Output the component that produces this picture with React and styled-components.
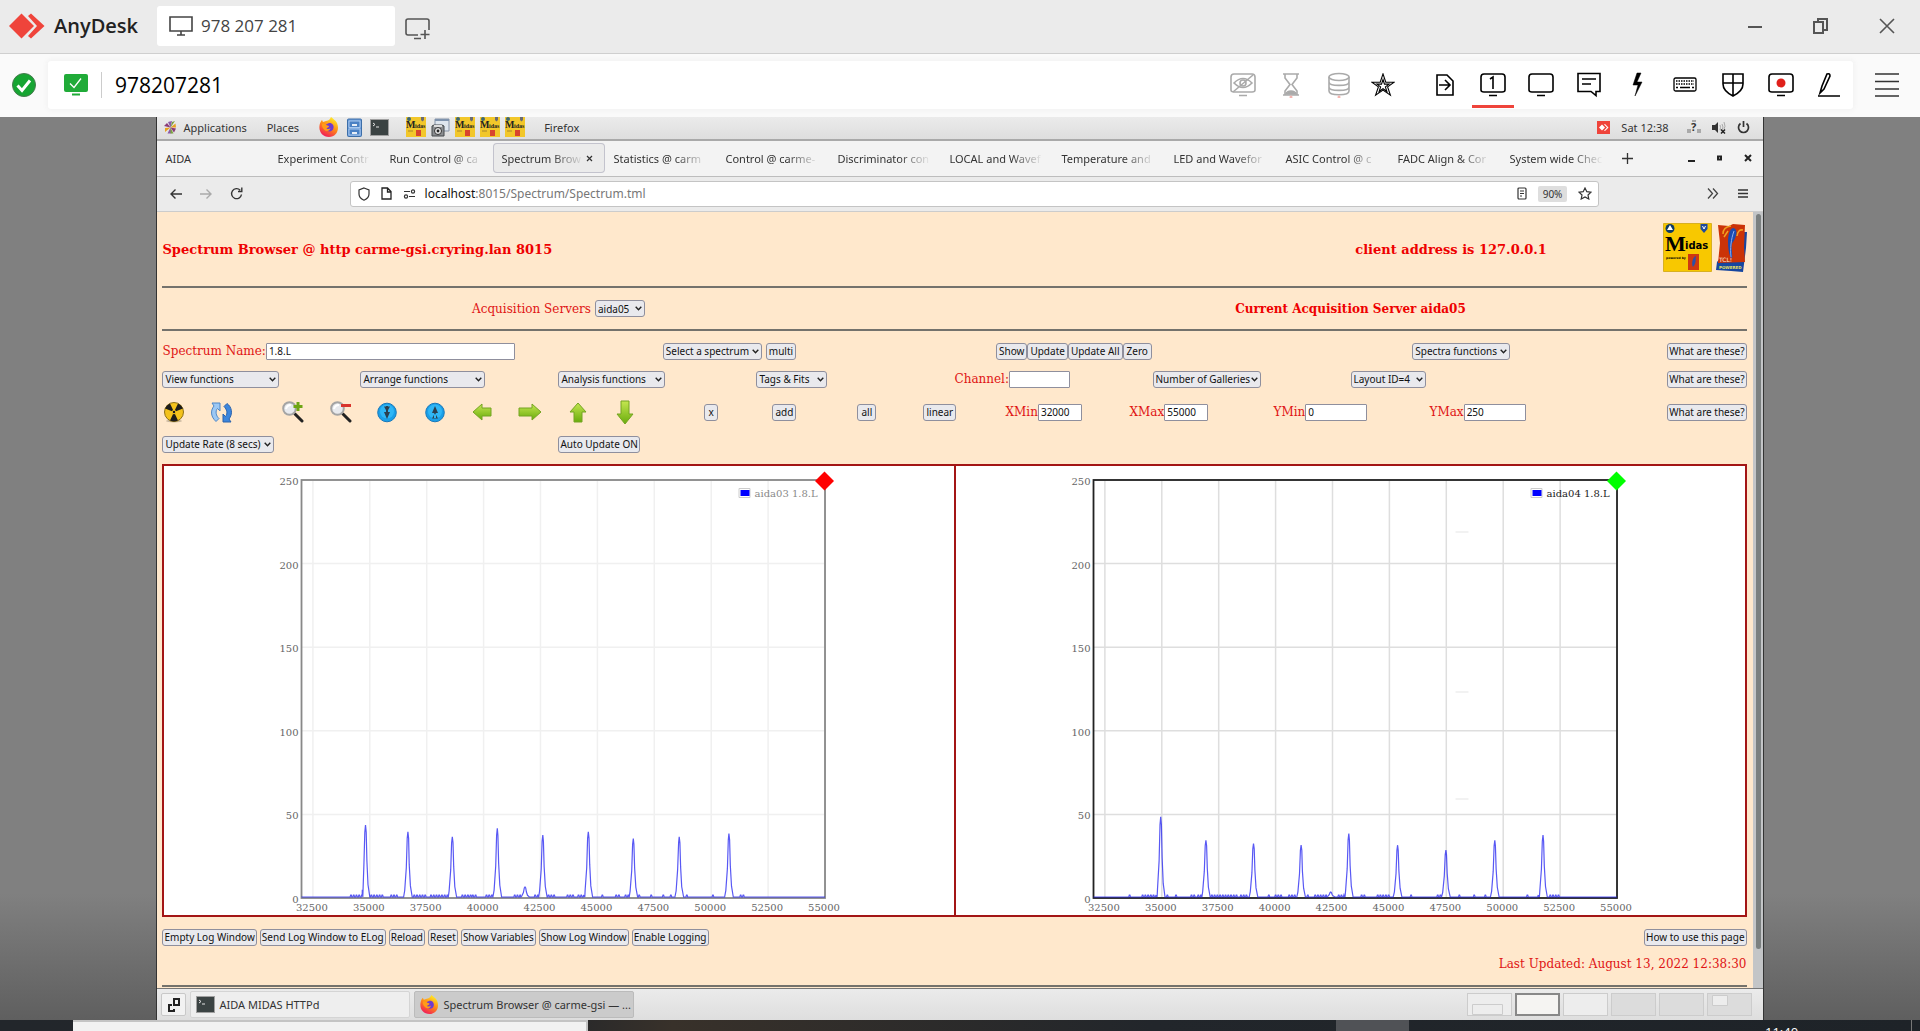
import React from "react"
import styled, { createGlobalStyle, css } from 'styled-components'


const App = () => (
  <Shell>
    <GlobalStyle />
    <TitleBar>
      <Brand>
        <AnyDeskMark />
        AnyDesk
      </Brand>
      <SessionTab type="button">
        <MonitorIcon />
        978 207 281
      </SessionTab>
      <NewSession type="button" aria-label="New session">
        <NewSessionIcon />
      </NewSession>
      <WindowButtons>
        <WindowButton type="button" aria-label="Minimize">
          <svg width="14" height="14" stroke="#555" strokeWidth="2"><path d="M0 8h14" /></svg>
        </WindowButton>
        <WindowButton type="button" aria-label="Restore">
          <svg width="16" height="16" fill="none" stroke="#555" strokeWidth="2"><path d="M1 4h9v11H1zM5 4V1h9v11h-4" /></svg>
        </WindowButton>
        <WindowButton type="button" aria-label="Close">
          <svg width="16" height="16" stroke="#555" strokeWidth="1.6"><path d="M1 1l14 14M15 1L1 15" /></svg>
        </WindowButton>
      </WindowButtons>
    </TitleBar>

    <AddressBar>
      <StatusIcon />
      <AddressBox>
        <ScreenCheckIcon />
        <AddressInput aria-label="Remote address" defaultValue="978207281" />
        <ToolGroup>
          {faded.map(([name, icon]) => <ToolButton key={name} type="button" aria-label={name} $faded>{icon}</ToolButton>)}
          <ToolButton type="button" aria-label="Favorite" $narrow>
            <svg {...line} width="24" height="24" strokeWidth="1.200"><path d="M13 1l3 9h9l-7 5 3 9-8-5.500-8 5.500 3-9-7-5h9z" /><path d="M13 7l1.600 5h5l-4 3 1.600 5-4.200-3-4.200 3 1.600-5-4-3h5z" /></svg>
          </ToolButton>
        </ToolGroup>
        <ToolGroup>
          {tools.map(([name, icon]) => <ToolButton key={name} type="button" aria-label={name} $active={name === 'Screen 1'}>{icon}</ToolButton>)}
        </ToolGroup>
      </AddressBox>
      <PlainButton type="button" aria-label="Menu">
        <svg width="24" height="24" stroke="#333" strokeWidth="1.600"><path d="M0 1h24M0 8.500h24M0 16h24M0 23h24" /></svg>
      </PlainButton>
    </AddressBar>

    <Viewer>
      <Desktop>
        <TopPanel>
          <PanelMenu type="button"><FootIcon />Applications</PanelMenu>
          <PanelMenu type="button">Places</PanelMenu>
          <Launchers>
            <FirefoxIcon size={20} />
            <CabinetIcon />
            <TerminalIcon />
          </Launchers>
          <Trays>
            <MidasSmall />
            <CameraIcon />
            <MidasSmall />
            <MidasSmall />
            <MidasSmall />
          </Trays>
          <PanelMenu type="button">Firefox</PanelMenu>
          <PanelRight>
            <svg width="13" height="13"><path fill="#ef443b" d="M0 0h13v13H0z" /><path fill="#fff" d="M2 6.500L5 3.500l3 3-3 3zM7 3.500l1-.5 3.500 3.500L8 10l-1-.5 3-3z" /></svg>
            <span>Sat 12:38</span>
            <NetworkIcon />
            <VolumeIcon />
            <PowerIcon />
          </PanelRight>
        </TopPanel>

        <TabStrip>
          {tabs.map((title, i) => (
            <Tab key={title} type="button" $selected={i === 3}>
              <TabText $whole={i === 0}>{title}</TabText>
              {i === 3 && <svg width="7" height="7" stroke="#333" strokeWidth="1.200"><path d="M1 1l5 5M6 1L1 6" /></svg>}
            </Tab>
          ))}
          <NewTab type="button" aria-label="New tab">
            <svg width="11" height="11" stroke="#333" strokeWidth="1.300"><path d="M5.500 0v11M0 5.500h11" /></svg>
          </NewTab>
          <TabWindowButtons>
            <PlainButton type="button" aria-label="Minimize browser"><svg width="7" height="8" stroke="#222" strokeWidth="2"><path d="M0 7h7" /></svg></PlainButton>
            <PlainButton type="button" aria-label="Restore browser"><svg width="7" height="8" fill="none" stroke="#222" strokeWidth="2"><path d="M2 2.500h3v3H2z" /></svg></PlainButton>
            <PlainButton type="button" aria-label="Close browser"><svg width="8" height="8" stroke="#222" strokeWidth="2"><path d="M1 1l6 6M7 1L1 7" /></svg></PlainButton>
          </TabWindowButtons>
        </TabStrip>

        <NavBar>
          <NavButtons>
            <PlainButton type="button" aria-label="Back"><svg width="12" height="12" fill="none" stroke="#333" strokeWidth="1.400"><path d="M12 6H1M5.500 1.500L1 6l4.500 4.500" /></svg></PlainButton>
            <PlainButton type="button" aria-label="Forward"><svg width="12" height="12" fill="none" stroke="#aaa" strokeWidth="1.400"><path d="M0 6h11M6.500 1.500L11 6l-4.500 4.500" /></svg></PlainButton>
            <PlainButton type="button" aria-label="Reload"><svg width="13" height="13" fill="none" stroke="#333" strokeWidth="1.400"><path d="M11.500 7.500a5 5 0 1 1-1.300-4.300M11.800.5v4H8" /></svg></PlainButton>
          </NavButtons>
          <UrlField>
            <svg width="12" height="14" fill="none" stroke="#333" strokeWidth="1.200"><path d="M6 1l5 2v4c0 3-2 5-5 6.200C3 12 1 10 1 7V3z" /></svg>
            <svg width="11" height="13" fill="none" stroke="#222" strokeWidth="1.300"><path d="M1 1h5.500L10 4.500V12H1zM6.500 1v4H10" /></svg>
            <svg width="13" height="10" fill="none" stroke="#333" strokeWidth="1.200"><path d="M1 2.500h6M6 7.500h6" /><circle cx="10" cy="2.500" r="1.600" /><circle cx="3" cy="7.500" r="1.600" /></svg>
            <Url><b>localhost</b>:8015/Spectrum/Spectrum.tml</Url>
            <svg width="10" height="13" fill="none" stroke="#333" strokeWidth="1.200"><rect x="1" y="1" width="8" height="11" rx="1" /><path d="M3 4h4M3 6.500h4M3 9h2" /></svg>
            <Zoom>90%</Zoom>
            <svg width="14" height="13" fill="none" stroke="#333" strokeWidth="1.200"><path d="M7 1l1.800 3.700 4.200.5-3 2.800.8 4L7 10l-3.800 2 .8-4-3-2.800 4.200-.5z" /></svg>
          </UrlField>
          <NavRight>
            <PlainButton type="button" aria-label="More tools"><svg width="12" height="11" fill="none" stroke="#444" strokeWidth="1.300"><path d="M1 .5l4.500 5L1 10.500M6 .5l4.500 5-4.500 5" /></svg></PlainButton>
            <PlainButton type="button" aria-label="Browser menu"><svg width="10" height="9" stroke="#333" strokeWidth="1.400"><path d="M0 1h10M0 4.500h10M0 8h10" /></svg></PlainButton>
          </NavRight>
        </NavBar>

        <BrowserBody>
          <Page>
            <PageHeader>
              <Heading>Spectrum Browser @ http carme-gsi.cryring.lan 8015</Heading>
              <HeaderSide>
                <Heading as="h3">client address is 127.0.0.1</Heading>
                <Logos><MidasLogo /><TclLogo /></Logos>
              </HeaderSide>
            </PageHeader>
            <Rule />
            <Servers>
              <Field>
                <label htmlFor="servers">Acquisition Servers</label>
                <Picker id="servers" $w={50} $gap={4}><option>aida05</option></Picker>
              </Field>
              <ServerName>Current Acquisition Server aida05</ServerName>
            </Servers>
            <Rule />
            <Controls>
              <Row $cols="500fr 333fr 416fr 334fr" $h={28}>
                <Field>
                  <label htmlFor="name">Spectrum Name:</label>
                  <TextBox id="name" $w={249} defaultValue="1.8.L" />
                </Field>
                <Buttons $gap={4}>
                  <Picker aria-label="Spectrum" $w={99}><option>Select a spectrum</option></Picker>
                  <Push type="button" $pad={2}>multi</Push>
                </Buttons>
                <Buttons>
                  <Push type="button" $pad={2}>Show</Push>
                  <Push type="button" $pad={2}>Update</Push>
                  <Push type="button" $pad={2}>Update All</Push>
                  <Push type="button" $pad={3}>Zero</Push>
                </Buttons>
                <Spread>
                  <Picker aria-label="Spectra functions" $w={98}><option>Spectra functions</option></Picker>
                  <Push type="button">What are these?</Push>
                </Spread>
              </Row>
              <Row $cols="repeat(6, 1fr) 2fr" $h={28}>
                <Picker aria-label="View functions" $w={117}><option>View functions</option></Picker>
                <Picker aria-label="Arrange functions" $w={125}><option>Arrange functions</option></Picker>
                <Picker aria-label="Analysis functions" $w={107}><option>Analysis functions</option></Picker>
                <Picker aria-label="Tags and fits" $w={71}><option>Tags &amp; Fits</option></Picker>
                <Field>
                  <label htmlFor="channel">Channel:</label>
                  <TextBox id="channel" $w={61} />
                </Field>
                <Picker aria-label="Number of galleries" $w={108}><option>Number of Galleries</option></Picker>
                <Spread>
                  <Picker aria-label="Layout" $w={75}><option>Layout ID=4</option></Picker>
                  <Push type="button">What are these?</Push>
                </Spread>
              </Row>
              <Row $cols="49fr 71fr 48fr 47fr 48fr 47fr 46fr 51fr 47fr 88fr 68fr 85fr 66fr 82fr 124fr 144fr 156fr 317fr" $h={38}>
                {actions.map(([name, icon]) => <PlainButton key={name} type="button" aria-label={name}>{icon}</PlainButton>)}
                <Push type="button" $pad={3}>x</Push>
                <Push type="button" $pad={2}>add</Push>
                <Push type="button" $pad={3}>all</Push>
                <Push type="button" $pad={2}>linear</Push>
                {limits.map(([name, value, width]) => (
                  <Field key={name}>
                    <label htmlFor={name}>{name}</label>
                    <TextBox id={name} $w={width} defaultValue={value} />
                  </Field>
                ))}
                <Spread>
                  <Field>
                    <label htmlFor="YMax">YMax</label>
                    <TextBox id="YMax" $w={62} defaultValue="250" />
                  </Field>
                  <Push type="button">What are these?</Push>
                </Spread>
              </Row>
              <Row $cols="1fr 3fr" $h={26}>
                <Picker aria-label="Update rate" $w={112}><option>Update Rate (8 secs)</option></Picker>
                <Push type="button">Auto Update ON</Push>
              </Row>
            </Controls>

            <Gallery>
              <Plot {...left} />
              <Plot {...right} />
            </Gallery>

            <Footer>
              <Buttons $gap={3}>
                {logButtons.map(text => <Push key={text} type="button">{text}</Push>)}
              </Buttons>
              <Push type="button">How to use this page</Push>
            </Footer>
            <Updated>Last Updated: August 13, 2022 12:38:30</Updated>
            <Rule />
          </Page>
          <Scrollbar><Thumb /></Scrollbar>
        </BrowserBody>

        <BottomPanel>
          <ShowDesktop type="button" aria-label="Show desktop">
            <svg width="12" height="14" fill="none" stroke="#222" strokeWidth="2"><path d="M6 1h5v6H6zM4 7H1v6h5v-2" /></svg>
          </ShowDesktop>
          <Task type="button"><TerminalIcon />AIDA MIDAS HTTPd</Task>
          <Task type="button" $selected><FirefoxIcon size={19} />Spectrum Browser @ carme-gsi — ...</Task>
          <Workspaces>
            <Workspace $lit><svg width="36" height="20" fill="#ededed" stroke="#ccc"><path d="M.5 9.500h30v10H.5z" /></svg></Workspace>
            <Workspace $current />
            <Workspace $lit />
            <Workspace />
            <Workspace />
            <Workspace><svg width="36" height="20" fill="#ededed" stroke="#ccc"><path d="M.5 .5h15v10H.5z" /></svg></Workspace>
          </Workspaces>
        </BottomPanel>
      </Desktop>
    </Viewer>

    <HostTaskbar>
      <SearchBox />
      <HostTask />
      <Clock>11:40</Clock>
    </HostTaskbar>
  </Shell>
)

export default App


// ---- data

// titles end where the tab cuts them
const tabs = [
  'AIDA', 'Experiment Contr', 'Run Control @ ca', 'Spectrum Brow',
  'Statistics @ carm', 'Control @ carme-', 'Discriminator con', 'LOCAL and Wavef',
  'Temperature and', 'LED and Wavefor', 'ASIC Control @ c', 'FADC Align & Cor',
  'System wide Chec',
]

const limits = [['XMin', '32000', 44], ['XMax', '55000', 44], ['YMin', '0', 62]]

const logButtons = [
  'Empty Log Window', 'Send Log Window to ELog', 'Reload', 'Reset',
  'Show Variables', 'Show Log Window', 'Enable Logging',
]

const left = {
  label: 'aida03 1.8.L',
  marker: '#ff0000',
  frame: '#888',
  grid: '#f0f0f0',
  legend: '#888',
  peaks: [[34812, 43], [36674, 39], [38625, 36], [40601, 41], [41820, 6], [42600, 37], [44600, 39], [46576, 35], [48596, 36], [50780, 38]],
  noise: [[34137, 34643], [35033, 35516], [35907, 36183], [36918, 37400], [37653, 38388], [39032, 39400], [39491, 39721], [40089, 40388], [41330, 41600], [42226, 42380], [42820, 43123], [43651, 43904], [44133, 44380], [45180, 45250], [45788, 45949], [46201, 46370], [46800, 46900], [47328, 47400], [47857, 47930], [48190, 48260], [48891, 49000], [50040, 50110], [51257, 51487]],
}

const right = {
  label: 'aida04 1.8.L',
  marker: '#00ff00',
  frame: '#222',
  grid: '#dedede',
  legend: '#222',
  ghosts: [66, 226, 333],
  peaks: [[34952, 48], [36938, 34], [39029, 32], [41120, 31], [42424, 3], [43215, 38], [45359, 31], [47481, 28], [49629, 34], [51747, 37]],
  noise: [[33549, 33620], [34120, 34740], [35207, 35300], [35588, 35660], [36267, 36400], [36566, 36700], [37164, 38251], [38441, 38800], [39665, 39740], [39963, 40290], [40562, 40861], [41377, 41450], [41703, 42192], [42736, 43008], [43742, 43932], [44448, 44992], [45916, 45990], [47084, 47280], [48036, 48100], [48689, 48760], [49178, 49250], [51026, 51100], [51515, 51560], [52031, 52466]],
}

const shape = [[-190, 0], [-140, 0.1], [-70, 0.45], [-30, 0.9], [0, 1], [30, 0.9], [60, 0.5], [110, 0.17], [190, 0]]

const toX = ch => 137 + (ch - 32000) * 523.5 / 23000
const toY = n => 432 - n * 418 / 250

const trace = (peaks, noise) => {
  const points = [[32000, 0], [55000, 0]]
  peaks.forEach(([ch, n]) => shape.forEach(([dx, k]) => points.push([ch + dx, n * k])))
  noise.forEach(([from, to]) => {
    for (let ch = from; ch < to; ch += 120) {
      points.push([ch, 0], [ch + 25, 1.2], [ch + 50, 1.2], [ch + 75, 0])
    }
  })
  return points
    .sort((a, b) => a[0] - b[0])
    .map(([ch, n]) => `${toX(ch).toFixed(1)},${(toY(n) - 1).toFixed(1)}`)
    .join(' ')
}

const xTicks = [32500, 35000, 37500, 40000, 42500, 45000, 47500, 50000, 52500, 55000]
const yTicks = [0, 50, 100, 150, 200, 250]

const Plot = ({ label, marker, frame, grid, legend, ghosts = [], peaks, noise }) => (
  <PlotSvg viewBox="0 0 788 449" role="img" aria-label={label}>
    <g stroke={grid} strokeWidth="1.500">
      {xTicks.map(x => <path key={x} d={`M${toX(x)} 14V432`} />)}
      {yTicks.map(y => <path key={y} d={`M137 ${toY(y)}H660`} />)}
      {ghosts.map(y => <path key={y} d={`M499 ${y}h13`} stroke="#eee" />)}
    </g>
    <rect x="137" y="14" width="523.5" height="418" fill="none" stroke={frame} strokeWidth="1.800" />
    <polyline points={trace(peaks, noise)} fill="none" stroke="#2020f0" strokeOpacity="0.75" strokeWidth="1.200" />
    <g fill="#666">
      {xTicks.map(x => <text key={x} x={toX(x) - 1} y="445" textAnchor="middle">{x}</text>)}
      {yTicks.map(y => <text key={y} x="134" y={toY(y) + 5} textAnchor="end">{y}</text>)}
    </g>
    <path d="M574.500 22.500h11v9h-11z" fill="#fff" stroke="#ccc" />
    <path d="M576 24h9v6h-9z" fill="#00f" />
    <text x="590" y="31" fill={legend}>{label}</text>
    <path d="M660 5.500l9.500 9.500-9.500 9.500-9.500-9.500z" fill={marker} />
  </PlotSvg>
)


// ---- drawings

const line = { width: 26, height: 26, viewBox: '0 0 26 26', fill: 'none', stroke: 'currentColor', strokeWidth: 1.6 }
const screen = <path d="M4 2h18q3 0 3 3v13q0 2-3 2H4q-3 0-3-2V5q0-3 3-3zM9 23.500h8" />

const faded = [
  ['Privacy', <svg {...line}>{screen}<path d="M4 11q9-9 18 0-9 9-18 0z" /><circle cx="13" cy="11" r="3" /><path d="M3 20L23 3" /></svg>],
  ['Wait', <svg {...line}><path d="M5 2h16M5 23h16M7 2v4l5 6.500L7 19v4M19 2v4l-5 6.500 5 6.500v4" /><path d="M8 22c1-4 9-4 10 0z" fill="currentColor" /><circle cx="13" cy="25" r="1.500" fill="#f4b5b0" stroke="none" /></svg>],
  ['Storage', <svg {...line}><ellipse cx="13" cy="5" rx="10" ry="3.500" /><path d="M3 5v14c0 5 20 5 20 0V5M3 10c0 4.500 20 4.500 20 0M3 15c0 4.500 20 4.500 20 0" /><circle cx="13" cy="25" r="1.500" fill="#f4b5b0" stroke="none" /></svg>],
]

const tools = [
  ['Transfer', <svg {...line}><path d="M5 3h10l6 6v14H5zM7 13h10M13 8l5 5-5 5" /></svg>],
  ['Screen 1', <svg {...line}>{screen}<path d="M10 7l3-2v12" /></svg>],
  ['Display', <svg {...line}>{screen}</svg>],
  ['Chat', <svg {...line}><path d="M2 1.500h22v18h-4v4l-5-4H2zM6 7h14M6 12h9" /></svg>],
  ['Actions', <svg {...line}><path d="M13 1l-4 12h5l-3 11 7-14h-5l4-9z" fill="currentColor" strokeWidth="0.500" /></svg>],
  ['Keyboard', <svg {...line} strokeWidth="1.300"><rect x="2" y="6" width="22" height="13" rx="1.500" /><path d="M4 9h18M4 12h18" strokeDasharray="1.500 1" /><path d="M4 15.500h2M8 15.500h10M20 15.500h2" /></svg>],
  ['Permissions', <svg {...line}><path d="M3 2h20v10c0 6-4 9-10 12C7 21 3 18 3 12zM13 2v22M3 11h20" /></svg>],
  ['Record', <svg {...line}>{screen}<circle cx="13" cy="11" r="4.500" fill="#e0201b" stroke="none" /></svg>],
  ['Whiteboard', <svg {...line}><path d="M2 24h22M4 21l2-7 5-12q3-1 3 2L8 17z" /></svg>],
]

const AnyDeskMark = () => (
  <svg width="36" height="26" fill="#ef443b"><path d="M0 13L12.500.5 25 13 12.500 25.500z" /><path d="M19 3l3-2.500L35.500 13 22 25.500 19 23l9-10z" /></svg>
)

const MonitorIcon = () => (
  <svg width="24" height="20" fill="none" stroke="#444" strokeWidth="1.600"><path d="M1 1h22v14H1zM12 15v4M8 19h8" /></svg>
)

const NewSessionIcon = () => (
  <svg width="26" height="22" fill="none" stroke="#555" strokeWidth="1.600"><path d="M13 17H3q-2 0-2-2V3q0-2 2-2h19q2 0 2 2v9M9 20.500h7M20 12v9M15.500 16.500h9" /></svg>
)

const StatusIcon = () => (
  <svg width="24" height="24"><circle cx="12" cy="12" r="11.500" fill="#16a532" stroke="#477a4e" /><path d="M5.500 12.500l4.500 5 8-10" fill="none" stroke="#fff" strokeWidth="3" /></svg>
)

const ScreenCheckIcon = () => (
  <svg width="24" height="22"><rect width="24" height="18" rx="2" fill="#20ab38" /><path d="M6 9.500l4 4 7-9" fill="none" stroke="#fff" strokeWidth="1.300" /><path d="M8 20.500h8" stroke="#20ab38" strokeWidth="2" /></svg>
)

const FootIcon = () => (
  <svg width="13" height="13">
    <path d="M6.500 6.500L4 1l4-1zM6.500 6.500l1 6-4 0z" fill="#8b5aa8" />
    <path d="M6.500 6.500l5-4 .5 4zM6.500 6.500L1 11l0-4z" fill="#e8a020" />
    <path d="M6.500 6.500l5.500 1-2 4zM6.500 6.500L0 5l3-3z" fill="#8a3a78" />
    <path d="M6.500 6.500L11 0 8 1zM6.500 6.500l3 6-3 0z" fill="#7ba23f" />
  </svg>
)

const FirefoxIcon = ({ size }) => (
  <svg width={size} height={size} viewBox="0 0 20 20">
    <defs>
      <linearGradient id="fox" x1="0.8" y1="0" x2="0.3" y2="1"><stop offset="0.1" stopColor="#ffe226" /><stop offset="0.5" stopColor="#ff8a16" /><stop offset="1" stopColor="#f0185c" /></linearGradient>
    </defs>
    <path fill="url(#fox)" d="M12 0c2 2 4.500 3 6 6 3 7-1 14-8 14S-1 14 .8 7C1.500 5 2 4 3 3l1 2 3-1c1 0 4-1 5-4z" />
    <path fill="#6f3bd0" d="M6 8l4-2c3-.5 5 2 4.500 5S11 15 8.500 14 5 10 6 8z" />
    <path fill="#ff9c1a" d="M3 7c2-1 4 0 5 1.500 1 0 2 .2 2 1s-2 1-2.500 2c1 1 3 .5 4-.5-.5 3-4 4-6 2S2.500 9 3 7z" />
  </svg>
)

const CabinetIcon = () => (
  <svg width="15" height="19"><rect x=".5" y="1" width="14" height="17.500" rx="1" fill="#6a9bd8" stroke="#3c6ea8" /><path d="M2 3h11v6.500H2zM2 11h11v6H2z" fill="#4b81c4" stroke="#a9c8ee" /><path d="M5 6h5v2H5zM5 14h5v2H5z" fill="#e8eef6" /></svg>
)

const TerminalIcon = () => (
  <svg width="19" height="17"><rect x=".5" y=".5" width="18" height="16" fill="#3b4343" stroke="#a0a0a0" /><path d="M3 4l2 1.500L3 7M6 8h3" fill="none" stroke="#e4e4e4" /></svg>
)

const CameraIcon = () => (
  <svg width="19" height="19"><path d="M4 1h14v12H4z" fill="#dfe6ee" stroke="#8795a8" /><path d="M4 1h14v2H4z" fill="#7f93ad" /><path d="M1 8l2-1h8l2 1v10H1z" fill="#8b8e91" stroke="#44484a" /><path d="M3 7h8v2H3z" fill="#ddd" /><circle cx="7" cy="13" r="3.500" fill="#e6e6e6" stroke="#333" /><circle cx="7" cy="13" r="1.400" fill="#222" /></svg>
)

const MidasSmall = () => (
  <svg width="20" height="20" viewBox="0 0 20 20" fontFamily="Liberation Serif, serif" fontWeight="700"><path fill="#f2c72a" d="M0 0h20v20H0z" /><circle cx="3" cy="2" r="2" fill="#3d6672" /><path d="M15 0h3v3l-1.500 1.500L15 3z" fill="#6a6a70" /><text x="0" y="11" fontSize="10" fill="#222">M</text><text x="9" y="11" fontSize="6" fill="#222">idas</text><path d="M10 13h5v6h-5z" fill="#d8452e" /><path d="M2 14h5" stroke="#a8862a" /></svg>
)

const MidasLogo = () => (
  <svg width="49" height="49" fontFamily="DejaVu Sans, sans-serif" fontWeight="700">
    <path fill="#f8c800" stroke="#d8b020" d="M.5.5h48v48H.5z" />
    <circle cx="7" cy="5.500" r="4.500" fill="#0d3a66" /><path d="M7 2l3 5H4z" fill="#fff" />
    <path d="M37.500 1h7v5l-3.500 4-3.500-4z" fill="#1e4a9c" /><path d="M39.500 3l1.500 3 1.500-3" stroke="#fff" fill="none" />
    <text x="2" y="28" fontFamily="Liberation Serif, serif" fontSize="22">M</text>
    <text x="22" y="26" fontSize="10">idas</text>
    <text x="3" y="36" fontSize="3">powered by</text>
    <path d="M25 31h11v16H25z" fill="#cf3a10" /><path d="M30 44c-2-4 0-10 3-11-1 4 1 6-3 11z" fill="#2b50a8" />
  </svg>
)

const TclLogo = () => (
  <svg width="31" height="49" fontFamily="DejaVu Sans, sans-serif">
    <path d="M1 39l27-30h3l-1 16-3 24-12-1-15-1z" fill="#1646a0" />
    <path d="M2 2l11 1 4-2 12 1-1 22 1 15-27 1 2-20z" fill="#cb3307" />
    <path d="M7 11q0-7 8-8M21 13q1-7 6-6M8 14l4-6" stroke="#f0a020" strokeWidth="1.500" fill="none" />
    <path d="M14 33c-3-9-3-26 3-28 6 1 3 10 0 14s0 10-1 17z" fill="#1a4bb0" /><path d="M15 34c-1-8 0-18 3-26" stroke="#8fb0ef" fill="none" />
    <text x="3" y="39" fontSize="6" fill="#ffe8d8">TCL!</text>
    <text x="3" y="46" fontSize="4" fontWeight="700" fill="#e8e060">POWERED</text>
  </svg>
)

const NetworkIcon = () => (
  <svg width="14" height="14" fontFamily="Noto Sans, sans-serif"><path d="M0 9h4v4H0zM10 9h4v4h-4zM5 0h4v2H5z" fill="#aaa" /><text x="4" y="11" fontSize="11" fontWeight="700" fill="#333">?</text></svg>
)

const VolumeIcon = () => (
  <svg width="14" height="13"><path d="M0 4h3l3-3v11L3 9H0z" fill="#333" /><path d="M8 4q1 2 0 5M10 3q2 3 0 6M12 1q2 5 0 7" stroke="#aaa" fill="none" /><path d="M9 8.500l4 4M13 8.500l-4 4" stroke="#222" strokeWidth="1.500" /></svg>
)

const PowerIcon = () => (
  <svg width="13" height="13" fill="none" stroke="#333" strokeWidth="1.700"><path d="M6.500 0v6M3.500 2.500a5 5 0 1 0 6 0" /></svg>
)

const RadiationIcon = () => (
  <svg width="22" height="21" viewBox="-2 0 22 21"><ellipse cx="10" cy="19" rx="8" ry="1.500" fill="#c9b79e" /><circle cx="10" cy="10" r="9.500" fill="#f3c21c" stroke="#8d7016" /><path d="M10 10L1 6.500A9.500 9.500 0 0 1 6 1.500zM10 10l9-3.500A9.500 9.500 0 0 0 14 1.500zM10 10l-4 8.500a9 9 0 0 0 8 0z" fill="#1c1c1c" /><circle cx="10" cy="10" r="1.800" fill="#1c1c1c" stroke="#f3c21c" /></svg>
)

const RefreshIcon = () => (
  <svg width="21" height="21" strokeLinejoin="round"><path d="M9 1H1l2 3C-1 9 0 15 5 19.500l3-3C5 14 4 9 6.500 6.500L9 9z" fill="#9cc8f4" stroke="#4d86c6" /><path d="M12 20h8l-2-3C22 12 21 5 16 1.500L13 4.500c3 3 4 7 1.500 10L12 12z" fill="#3d86dd" stroke="#2b62ab" /></svg>
)

const Lens = ({ children }) => (
  <svg width="22" height="22"><path d="M13 13l7 7" stroke="#222" strokeWidth="3" strokeLinecap="round" /><circle cx="7.500" cy="7.500" r="6.300" fill="#e8eaee" stroke="#a4a4a4" strokeWidth="2" /><path d="M4 8q1-4 5-4" stroke="#fff" strokeWidth="2" fill="none" />{children}</svg>
)

const RoundIcon = ({ d }) => (
  <svg width="20" height="21"><circle cx="10" cy="10.500" r="9.300" fill="#1a9fe8" stroke="#1878ba" /><circle cx="10" cy="9.500" r="7" fill="#2fb6f6" /><path d={d} fill="#2a3f50" /></svg>
)

const ArrowIcon = ({ w = 20, h = 18, d }) => (
  <svg width={w} height={h}>
    <defs><linearGradient id="leaf" x2="0" y2="1"><stop offset="0" stopColor="#c5e650" /><stop offset="1" stopColor="#69ac0c" /></linearGradient></defs>
    <path d={d} fill="url(#leaf)" stroke="#74a422" strokeLinejoin="round" />
  </svg>
)

const actions = [
  ['Initialise', <RadiationIcon />],
  ['Refresh', <RefreshIcon />],
  ['Zoom in', <Lens><path d="M16 1v9M11.500 5.500h9" stroke="#6fa514" strokeWidth="3" /></Lens>],
  ['Zoom out', <Lens><path d="M11 4.500h10" stroke="#d8342c" strokeWidth="3" /></Lens>],
  ['Page down', <RoundIcon d="M7 4.500h6L10 10zM7 10h6L10 17zM9 4h2v6H9z" />],
  ['Page up', <RoundIcon d="M7 16.500h6L10 11zM7 11h6L10 4zM9 11h2v6H9z" />],
  ['Left', <ArrowIcon d="M1 9l9-8v4h9v8h-9v4z" />],
  ['Right', <ArrowIcon w={24} d="M23 9l-9-8v4H1v8h13v4z" />],
  ['Up', <ArrowIcon w={18} h={21} d="M9 1l8 9h-4v10H5V10H1z" />],
  ['Down', <ArrowIcon w={18} h={25} d="M9 24l8-10h-4V1H5v13H1z" />],
]


// ---- styles

const GlobalStyle = createGlobalStyle`
  *, *::before, *::after {
    box-sizing: border-box;
  }
  body {
    margin: 0;
    overflow: hidden;
    font-family: 'Noto Sans', sans-serif;
    font-size: 11px;
  }
  svg {
    flex: none;
    display: block;
  }
`

const bareButton = css`
  display: flex;
  align-items: center;
  margin: 0;
  padding: 0;
  border: 0;
  background: none;
  font: inherit;
  color: inherit;
  white-space: nowrap;
`

const Shell = styled.div`
  height: 100vh;
  display: flex;
  flex-direction: column;
`

const TitleBar = styled.header`
  flex: none;
  height: 54px;
  display: flex;
  align-items: center;
  padding: 0 0 2px 9px;
  background: #ebebeb;
  border-bottom: 1px solid #cfcfcf;
  font-family: 'Open Sans', sans-serif;
`

const Brand = styled.div`
  width: 148px;
  display: flex;
  align-items: center;
  gap: 9px;
  font-size: 20px;
  font-weight: 600;
  color: #222;
`

const SessionTab = styled.button`
  ${bareButton}
  width: 238px;
  height: 40px;
  gap: 8px;
  margin-right: 10px;
  padding: 0 12px;
  border-radius: 3px;
  background: #fff;
  font-size: 17px;
  color: #444;
`

const PlainButton = styled.button`
  ${bareButton}
`

const NewSession = styled(PlainButton)`
  padding-top: 6px;
`

const WindowButtons = styled.div`
  display: flex;
  margin-left: auto;
`

const WindowButton = styled.button`
  ${bareButton}
  justify-content: center;
  width: 66px;
  height: 40px;
`

const AddressBar = styled.div`
  flex: none;
  height: 63px;
  display: flex;
  align-items: center;
  gap: 12px;
  padding: 0 21px 2px 12px;
  background: #fafafa;
  > button {
    margin-left: 10px;
  }
`

const AddressBox = styled.div`
  flex: 1;
  height: 48px;
  display: flex;
  align-items: center;
  gap: 10px;
  padding-left: 16px;
  border-radius: 3px;
  background: #fff;
  box-shadow: 0 0 4px 2px #f3f3f3;
`

const AddressInput = styled.input`
  flex: 1;
  min-width: 0;
  height: 26px;
  margin-left: 3px;
  padding: 0 0 0 13px;
  border: 0;
  border-left: 1px solid #ccc;
  outline: 0;
  font-family: 'Open Sans', sans-serif;
  font-size: 21px;
  color: #000;
`

const ToolGroup = styled.div`
  display: flex;
  & + & {
    margin-left: 8px;
  }
`

const ToolButton = styled.button`
  ${bareButton}
  position: relative;
  justify-content: center;
  width: ${p => p.$narrow ? 40 : 48}px;
  height: 48px;
  color: ${p => p.$faded ? '#aaa' : '#000'};
  ${p => p.$active && css`
    &::after {
      content: '';
      position: absolute;
      left: 3px;
      right: 3px;
      bottom: 1px;
      height: 3px;
      background: #ef443b;
    }
  `}
`

const Viewer = styled.main`
  flex: 1;
  min-height: 0;
  display: flex;
  justify-content: center;
  background: linear-gradient(#808080 86%, #5f5f5f);
`

const Desktop = styled.div`
  width: 83.7%;
  display: flex;
  flex-direction: column;
  border: solid #333;
  border-width: 0 1px;
  color: #333;
`

const TopPanel = styled.div`
  flex: none;
  height: 24px;
  display: flex;
  align-items: center;
  padding: 0 13px 2px 7px;
  background: linear-gradient(#ebebeb, #dedede);
  border-bottom: 2px solid #a9a9a9;
`

const PanelMenu = styled.button`
  ${bareButton}
  gap: 6px;
  margin-right: 20px;
`

const Launchers = styled.div`
  display: flex;
  align-items: center;
  gap: 8px;
  margin-right: 17px;
`

const Trays = styled.div`
  display: flex;
  align-items: center;
  gap: 5px;
  margin-right: 19px;
`

const PanelRight = styled.div`
  display: flex;
  align-items: center;
  gap: 11px;
  margin-left: auto;
  span {
    margin: 0 7px 0 0;
  }
`

const TabStrip = styled.div`
  flex: none;
  height: 36px;
  display: flex;
  align-items: center;
  padding-bottom: 1px;
  background: #f3f3f3;
  border-bottom: 1px solid #bdbdbd;
`

const Tab = styled.button`
  ${bareButton}
  flex: 0 1 112px;
  min-width: 0;
  height: 30px;
  padding: 0 8px;
  ${p => p.$selected && css`
    padding-right: 12px;
    border-radius: 4px;
    background: #ebebeb;
    box-shadow: inset 0 0 0 1px #c3c3cd;
  `}
`

const TabText = styled.span`
  flex: 1;
  min-width: 0;
  overflow: hidden;
  text-align: left;
  mask-image: ${p => p.$whole ? 'none' : 'linear-gradient(to left, transparent 2px, #000 34px)'};
`

const NewTab = styled(PlainButton)`
  margin-left: 9px;
`

const TabWindowButtons = styled.div`
  display: flex;
  gap: 21px;
  margin-left: auto;
  padding-right: 11px;
`

const NavBar = styled.div`
  flex: none;
  height: 35px;
  display: grid;
  grid-template-columns: 192fr 1249fr 163fr;
  align-items: center;
  padding-bottom: 1px;
  background: #ebebeb;
  border-bottom: 1px solid #ccc;
`

const NavButtons = styled.div`
  display: flex;
  gap: 18px;
  padding-left: 13px;
`

const UrlField = styled.div`
  height: 26px;
  display: flex;
  align-items: center;
  gap: 11px;
  padding: 0 6px 0 7px;
  border: 1px solid #c4c4c4;
  border-radius: 3px;
  background: #fff;
`

const Url = styled.span`
  flex: 1;
  margin-left: -2px;
  font-size: 12px;
  color: #777;
  b {
    font-weight: 400;
    color: #111;
  }
`

const Zoom = styled.span`
  padding: 0 5px;
  line-height: 16px;
  border-radius: 2px;
  background: #dedede;
  font-size: 10px;
`

const NavRight = styled.div`
  display: flex;
  justify-content: flex-end;
  gap: 19px;
  padding-right: 15px;
`

const BrowserBody = styled.div`
  flex: 1;
  min-height: 0;
  display: flex;
  background: #ffe8cc;
`

const Page = styled.div`
  flex: 1;
  min-width: 0;
  padding: 0 6px 0 5px;
  font-family: 'DejaVu Serif', serif;
  font-size: 12px;
  color: #e01414;
`

const PageHeader = styled.div`
  height: 74px;
  display: grid;
  grid-template-columns: 1192fr 391fr;
  align-items: center;
`

const Heading = styled.h2`
  margin: 0;
  font-size: 13px;
  color: #ee0000;
  white-space: nowrap;
`

const HeaderSide = styled.div`
  display: flex;
  align-items: center;
  justify-content: space-between;
`

const Logos = styled.div`
  display: flex;
  gap: 4px;
  padding-bottom: 3px;
`

const Rule = styled.hr`
  margin: 0;
  border: 0;
  height: 2px;
  background: #74726c;
`

const Servers = styled.div`
  height: 41px;
  display: grid;
  grid-template-columns: 1fr 1fr;
  align-items: center;
  justify-items: center;
`

const ServerName = styled.strong`
  color: #ee0000;
`

const Field = styled.div`
  display: flex;
  align-items: center;
  white-space: nowrap;
`

const control = css`
  height: 17px;
  margin: 0;
  border: 1px solid #8f8f9d;
  border-radius: 3px;
  background-color: #e9e9ed;
  font-family: 'Noto Sans', sans-serif;
  font-size: 10px;
  line-height: 14px;
  color: #111;
`

const TextBox = styled.input`
  ${control}
  width: ${p => p.$w}px;
  padding: 0 2px;
  border-radius: 1px;
  background-color: #fff;
`

const Picker = styled.select`
  ${control}
  appearance: none;
  width: ${p => p.$w}px;
  margin-left: ${p => p.$gap || 0}px;
  padding: 0 0 0 2px;
  background-image: url("data:image/svg+xml,%3Csvg xmlns='http://www.w3.org/2000/svg' width='7' height='5' fill='none' stroke='%23222' stroke-width='1.4'%3E%3Cpath d='M.7.7l2.800 3 2.800-3'/%3E%3C/svg%3E");
  background-repeat: no-repeat;
  background-position: right 2px center;
`

const Push = styled.button`
  ${control}
  padding: 0 ${p => p.$pad || 1}px;
  white-space: nowrap;
`

const Controls = styled.div`
  padding: 6px 0 7px;
`

const Row = styled.div`
  display: grid;
  grid-template-columns: ${p => p.$cols};
  height: ${p => p.$h}px;
  align-items: center;
  justify-items: start;
  > * {
    min-width: 0;
  }
`

const Buttons = styled.div`
  display: flex;
  gap: ${p => p.$gap || 0}px;
`

const Spread = styled.div`
  justify-self: stretch;
  display: flex;
  align-items: center;
  justify-content: space-between;
`

const Gallery = styled.div`
  display: grid;
  grid-template-columns: 1fr 1fr;
  gap: 2px;
  border: 2px solid #a31515;
  background: #a31515;
`

const PlotSvg = styled.svg`
  width: 100%;
  height: 449px;
  background: #fff;
  font-size: 10px;
`

const Footer = styled.div`
  height: 40px;
  display: flex;
  align-items: center;
  justify-content: space-between;
`

const Updated = styled.p`
  margin: 0 0 13px;
  line-height: 15px;
  text-align: right;
`

const Scrollbar = styled.div`
  width: 10px;
  padding: 2px 2px 0 3px;
  background: #c3c5c7;
`

const Thumb = styled.div`
  width: 5px;
  height: 95%;
  border-radius: 3px;
  background: #7b8080;
`

const BottomPanel = styled.div`
  flex: none;
  height: 32px;
  display: flex;
  align-items: center;
  gap: 4px;
  padding: 0 11px 0 4px;
  background: linear-gradient(#ebebeb, #dedede);
  border-top: 1px solid #777;
`

const ShowDesktop = styled.button`
  ${bareButton}
  justify-content: center;
  width: 25px;
  height: 23px;
  border: 1px solid #c8c8c8;
  border-radius: 2px;
  background: #f2f2f2;
`

const Task = styled.button`
  ${bareButton}
  width: 220px;
  height: 27px;
  gap: 4px;
  padding: 0 5px;
  border: 1px solid ${p => p.$selected ? '#bbb' : '#d4d4d4'};
  border-radius: 2px;
  background: ${p => p.$selected ? '#cbcbcb' : '#eee'};
`

const Workspaces = styled.div`
  display: flex;
  gap: 3px;
  margin-left: auto;
`

const Workspace = styled.div`
  width: 45px;
  height: 23px;
  padding: 1px 4px;
  border: 1px solid #ccc;
  background: ${p => p.$lit ? '#ededed' : '#dcdcdc'};
  ${p => p.$current && css`
    border: 2px solid #888;
    background: #f5f4f2;
  `}
`

const HostTaskbar = styled.footer`
  flex: none;
  height: 11px;
  display: flex;
  overflow: hidden;
  background: linear-gradient(to right, #22262b 0%, #23262a 28%, #38312a 35%, #22262b 60%, #1e2328);
`

const SearchBox = styled.div`
  width: 515px;
  margin-left: 73px;
  border: solid #c4c4c4;
  border-width: 2px 2px 0 0;
  background: #f2f2f2;
`

const HostTask = styled.div`
  width: 73px;
  margin-left: auto;
  background: #505256;
`

const Clock = styled.time`
  width: 503px;
  padding: 3px 0 0 356px;
  border-right: 1px solid #777;
  margin-right: 8px;
  font-family: 'Open Sans', sans-serif;
  font-size: 13px;
  line-height: 18px;
  color: #fff;
`
